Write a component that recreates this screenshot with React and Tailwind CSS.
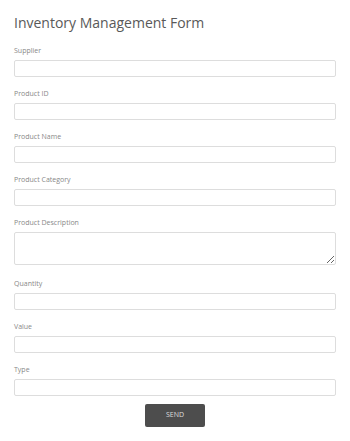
export default function App() {
  const fields = [
    { label: "Supplier" },
    { label: "Product ID" },
    { label: "Product Name" },
    { label: "Product Category" },
    { label: "Product Description", textarea: true },
    { label: "Quantity" },
    { label: "Value" },
    { label: "Type" },
  ];
  return (
    <div className="w-[350px] min-h-[441px] bg-white px-[14px] pt-[13px]" style={{ fontFamily: '"Open Sans", sans-serif' }}>
      <h1 className="text-[14px] font-normal leading-[20px] text-[#595959] mb-[13px]">Inventory Management Form</h1>
      {fields.map((f) => (
        <div key={f.label} className={f.textarea ? "mb-[14px]" : "mb-[12px]"}>
          <label className="block text-[7px] leading-[10px] text-[#888888] mb-[4px]">{f.label}</label>
          {f.textarea ? (
            <textarea className="block w-full h-[33px] border border-[#dddddd] rounded-[2px] bg-white outline-none resize-y" />
          ) : (
            <input className="block w-full h-[17px] border border-[#dddddd] rounded-[2px] bg-white outline-none" />
          )}
        </div>
      ))}
      <div className="flex justify-center">
        <button className="w-[60px] h-[23px] bg-[#4d4d4d] rounded-[2px] text-[#dddddd] text-[7px] -mt-[4px]">SEND</button>
      </div>
    </div>
  );
}
